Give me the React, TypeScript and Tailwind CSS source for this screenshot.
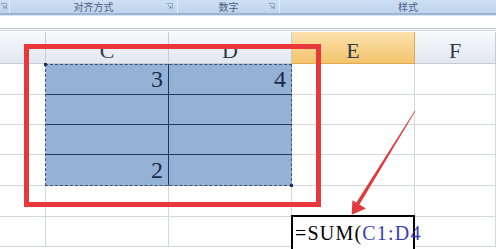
import React from 'react';

const serif = { fontFamily: '"Liberation Serif", "Times New Roman", serif' };

const cols = ['B', 'C', 'D', 'E', 'F'];
const widths = ['w-[46px]', 'w-[123px]', 'w-[123px]', 'w-[123px]', 'flex-1'];
const rowHeights = ['h-[31px]', 'h-[30px]', 'h-[30px]', 'h-[31px]', 'h-[31px]', 'h-[30px]'];

// values for C1:D4
const values: Record<string, string> = { '0-1': '3', '0-2': '4', '3-1': '2' };

const Launcher = () => (
  <svg width="7" height="7" viewBox="0 0 7 7" className="shrink-0">
    <path d="M0.5 0.5 H6.5 V6.5" fill="none" stroke="#8ea6c6" strokeWidth="1" />
    <path d="M2 2 L5 5 M5 3 V5 H3" fill="none" stroke="#6f86a8" strokeWidth="0.8" />
  </svg>
);

const ribbonText = 'pt-[1px] text-[10px] leading-[11px] text-[#4b5f84]';
const cjk = { fontFamily: '"Noto Sans CJK SC", sans-serif' };

const RibbonGroup = ({ label, className }: { label: string; className: string }) => (
  <div className={`relative flex h-full items-start justify-center border-r border-[#e4edf8] ${className}`}>
    <span className={ribbonText} style={cjk}>
      {label}
    </span>
    <div className="absolute right-[4px] top-[3px]">
      <Launcher />
    </div>
  </div>
);

const App = () => {
  return (
    <div className="relative h-[249px] w-[496px] overflow-hidden bg-white">
      {/* ribbon bottom strip */}
      <div className="flex h-[13px] w-[560px] bg-gradient-to-b from-[#cddff3] to-[#bfd4ec]">
        <div className="relative h-full w-[10px] border-r border-[#e4edf8]">
          <div className="absolute left-[0px] top-[3px]">
            <Launcher />
          </div>
        </div>
        <RibbonGroup label="对齐方式" className="w-[168px]" />
        <RibbonGroup label="数字" className="w-[102px]" />
        <div className="flex h-full w-[256px] items-start justify-center">
          <span className={ribbonText} style={cjk}>
            样式
          </span>
        </div>
      </div>
      <div className="h-[2px] bg-[#9db5d4]" />
      <div className="h-[1px] bg-[#dbe5f1]" />
      <div className="h-[12px] bg-white" />
      <div className="h-[1px] bg-[#c3ccd7]" />
      <div className="h-[1px] bg-[#eef1f5]" />
      <div className="h-[1px] bg-[#d5dce5]" />
      <div className="h-[1px] bg-white" />

      {/* column headers */}
      <div className="flex h-[32px]">
        {cols.map((c, i) => (
          <div
            key={c}
            className={`${widths[i]} flex items-center justify-center border-b border-r ${
              c === 'E'
                ? 'border-[#e0a94a] bg-gradient-to-b from-[#fbe2ae] to-[#f3c46c]'
                : 'border-[#c6ccd5] bg-gradient-to-b from-[#f7f9fc] to-[#e2e8f0]'
            }`}
          >
            <span className="pt-[6px] text-[22px] leading-none text-[#2f3a4a]" style={serif}>
              {c === 'B' ? '' : c}
            </span>
          </div>
        ))}
      </div>

      {/* rows */}
      {rowHeights.map((h, r) => (
        <div key={r} className={`flex ${h}`}>
          {cols.map((c, i) => {
            const selected = r < 4 && (i === 1 || i === 2);
            const editing = r === 5 && i === 3;
            const val = values[`${r}-${i}`];
            if (editing) {
              return (
                <div key={c} className={`${widths[i]} relative border-b border-r border-[#d4d8de]`}>
                  <div className="absolute -left-[1px] -top-[2px] h-[40px] w-[124px] border-2 border-black bg-white">
                    <span className="absolute left-[2px] top-[6px] whitespace-nowrap text-[20px] leading-none tracking-[1.2px] text-black" style={serif}>
                      =SUM(<span className="text-[#3a40b8]">C1:D4</span>
                    </span>
                  </div>
                </div>
              );
            }
            return (
              <div
                key={c}
                className={`${widths[i]} flex items-end justify-end border-b border-r pb-[3px] pr-[5px] ${
                  selected ? 'border-[#23375e] bg-[#94b1d6]' : 'border-[#d4d8de] bg-white'
                } ${selected && i === 2 ? 'border-r-transparent' : ''} ${selected && r === 3 ? 'border-b-transparent' : ''}`}
              >
                {val && (
                  <span className="text-[24px] leading-none text-[#1d2b4b]" style={serif}>
                    {val}
                  </span>
                )}
              </div>
            );
          })}
        </div>
      ))}

      {/* selection marquee */}
      <div className="pointer-events-none absolute left-[45px] top-[64px] h-[122px] w-[247px] border border-dashed border-[#3b4f74]">
        <div className="absolute -left-[2px] -top-[2px] h-[3px] w-[3px] bg-[#1f2f6a]" />
        <div className="absolute -bottom-[2px] -right-[2px] h-[3px] w-[3px] bg-[#1f2f6a]" />
      </div>

      {/* red highlight box */}
      <div className="pointer-events-none absolute left-[24px] top-[44px] h-[163px] w-[297px] border-[5px] border-[#e8383b]" />

      {/* arrow */}
      <svg className="pointer-events-none absolute left-0 top-0" width="496" height="249" viewBox="0 0 496 249">
        <polygon points="415.3,111.2 358.6,205.9 355.4,204.1 414.7,110.8" fill="#e03a3c" />
        <polygon points="351.7,214.8 352.4,200.2 366,208.6" fill="#e03a3c" />
      </svg>
    </div>
  );
};

export default App;
